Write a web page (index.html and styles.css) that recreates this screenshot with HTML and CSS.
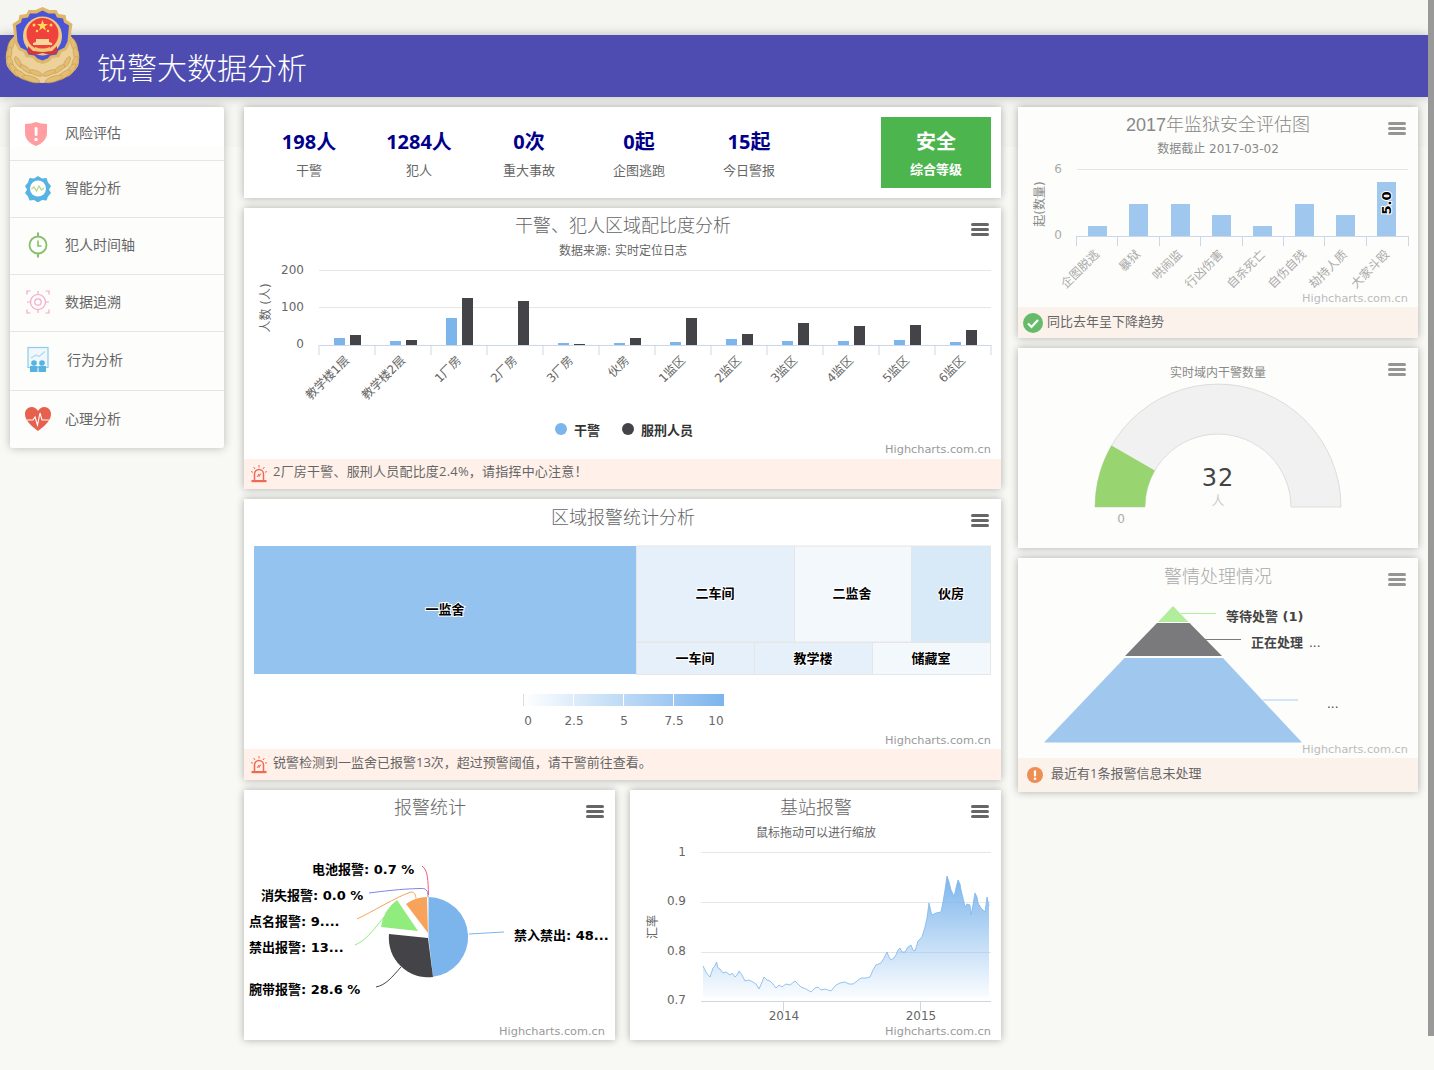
FILE: index.html
```html
<!DOCTYPE html>
<html>
<head>
	<meta charset="utf-8">
	<title>锐警大数据分析</title>
	<link rel="stylesheet" href="styles.css">
</head>

<body>
	<svg class="sprite">
		<symbol id="menu" viewBox="0 0 18 13">
			<rect x="0" y="0" width="18" height="3" rx="1.5" />
			<rect x="0" y="5" width="18" height="3" rx="1.5" />
			<rect x="0" y="10" width="18" height="3" rx="1.5" />
		</symbol>
		<symbol id="alarm" viewBox="0 0 16 18">
			<path d="M3.5 15V9a4.5 4.5 0 0 1 9 0v6" fill="none" stroke="#ef6a55" stroke-width="1.5" />
			<path d="M6 12l2-3v2.5l2-3" fill="none" stroke="#ef6a55" stroke-width="1" />
			<rect x="0.5" y="15" width="15" height="2.2" fill="#ef6a55" />
			<path d="M8 0v2.5M2.6 2l1.4 2M13.4 2L12 4M0 6.500l2 .8M16 6.500l-2 .8" stroke="#ef6a55" stroke-width="1" />
		</symbol>
		<symbol id="leaves" viewBox="0 0 45 85">
			<path d="M16 34C7 44 4 56 7 66c5 10 20 16 36 17V60z" fill="#ecd19a" />
			<g fill="#e3bd72" stroke="#c79c52" stroke-width=".6">
				<ellipse cx="11" cy="45" rx="7" ry="2.600" transform="rotate(-70 11 45)" />
				<ellipse cx="9" cy="54" rx="7" ry="2.600" transform="rotate(-80 9 54)" />
				<ellipse cx="10" cy="63" rx="7" ry="2.800" transform="rotate(75 10 63)" />
				<ellipse cx="14" cy="70" rx="7.500" ry="2.800" transform="rotate(55 14 70)" />
				<ellipse cx="21" cy="75" rx="8" ry="2.800" transform="rotate(35 21 75)" />
				<ellipse cx="31" cy="79" rx="9" ry="2.800" transform="rotate(18 31 79)" />
				<ellipse cx="18" cy="62" rx="6" ry="2.200" transform="rotate(60 18 62)" />
				<ellipse cx="26" cy="69" rx="7" ry="2.200" transform="rotate(35 26 69)" />
				<ellipse cx="36" cy="73" rx="7" ry="2.200" transform="rotate(20 36 73)" />
			</g>
		</symbol>
	</svg>

	<svg class="logo" viewBox="0 0 85 90" width="85" height="90">
		<use href="#leaves" x="0" y="0" width="45" height="85" />
		<use href="#leaves" x="-85" y="0" width="45" height="85" transform="scale(-1 1)" />
		<path d="M42.500 7l7 3 7 0 2 4 7 1 1 5 6 4-1 6-1 12-4 8-5 2-2 5-7 1-4 4-6 2-6-2-4-4-7-1-2-5-5-2-4-8-1-12-1-6 6-4 1-5 7-1 2-4 7 0z" fill="#e0b768" />
		<path d="M42.500 10.500l6 3 6.500 0 2 4 6 1 1 4 5 3-1.500 16-3 6-6 3-2 4-6 1-3 3-5 2-5-2-3-3-6-1-2-4-6-3-3-6-1.500-16 5-3 1-4 6-1 2-4 6.500 0z" fill="#4a54d6" />
		<circle cx="42.500" cy="36" r="19.500" fill="#efca84" />
		<circle cx="42.500" cy="34" r="16" fill="#f0423c" />
		<path d="M28 46l5 5 9.500 1 9.500-1 5-5v7l-7 2-7.500-2-7.500 2-7-2z" fill="#d8343a" />
		<path d="M42.500 20l1.400 4h4.100l-3.300 2.500 1.200 4-3.400-2.400-3.400 2.400 1.200-4-3.300-2.500h4.100z" fill="#ffd95a" />
		<circle cx="34" cy="25" r="1.500" fill="#ffd95a" />
		<circle cx="51" cy="25" r="1.500" fill="#ffd95a" />
		<circle cx="37" cy="31" r="1.200" fill="#ffd95a" />
		<circle cx="48" cy="31" r="1.200" fill="#ffd95a" />
		<path d="M33 45h19v-2l-3-1v-3h-13v3l-3 1z" fill="#f5d89a" />
		<path d="M35 47c5 2 10 2 15 0v3c-5 2-10 2-15 0z" fill="#f0c878" />
	</svg>

	<header class="topbar">
		<h1 class="topbar-title">锐警大数据分析</h1>
	</header>

	<div class="page">
		<ul class="sidebar">
			<li class="nav-item nav-first">
				<svg class="nav-icon nav-icon-first" viewBox="0 0 28 28" width="28" height="28">
					<path d="M3 4c4 0 8-1 11-2 3 1 7 2 11 2v9c0 6-5 11-11 13C8 24 3 19 3 13z" fill="#ff9da1" />
					<rect x="12.700" y="7" width="2.800" height="9" rx="1.200" fill="#fff" />
					<circle cx="14" cy="19.500" r="1.700" fill="#fff" />
				</svg>
				<span>风险评估</span>
			</li>
			<li class="nav-item">
				<svg class="nav-icon" viewBox="0 0 28 28" width="28" height="28">
					<path d="M14 2l4 2.500 4.500-.5 1.500 4.500 3 3.500-2 3.500 2 3.500-3 3.500-1.500 4-4.500-.5-4 2.500-4-2.500-4.500.5-1.500-4-3-3.500 2-3.500-2-3.500 3-3.500 1.500-4.500 4.500.5z" fill="#56b3e4" />
					<circle cx="14" cy="14.500" r="8" fill="#fff" />
					<path d="M7.500 15l2.500-2 2.500 4 2.500-5 2.500 4 2.500-2" fill="none" stroke="#b9d77e" stroke-width="1.300" />
				</svg>
				<span>智能分析</span>
			</li>
			<li class="nav-item">
				<svg class="nav-icon" viewBox="0 0 28 28" width="28" height="28">
					<circle cx="14" cy="14" r="8.500" fill="none" stroke="#86c16a" stroke-width="1.800" />
					<path d="M14 9.500V15h3.500" fill="none" stroke="#86c16a" stroke-width="1.600" />
					<path d="M14 1.500v4M14 22.500v4" stroke="#86c16a" stroke-width="2" />
				</svg>
				<span>犯人时间轴</span>
			</li>
			<li class="nav-item">
				<svg class="nav-icon" viewBox="0 0 28 28" width="28" height="28">
					<g fill="none" stroke="#f3a8c9" stroke-width="1.200">
						<circle cx="14" cy="14" r="7.500" />
						<circle cx="14" cy="14" r="3.200" />
						<path d="M14 3v3M14 22v3M3 14h3M22 14h3" />
						<path d="M3 6.500V3h3.500M21.500 3H25v3.500M25 21.500V25h-3.500M6.500 25H3v-3.500" />
					</g>
				</svg>
				<span>数据追溯</span>
			</li>
			<li class="nav-item nav-tall">
				<svg class="nav-icon" viewBox="0 0 28 28" width="28" height="28">
					<rect x="4" y="1.500" width="20" height="20" fill="#eef7fc" stroke="#8fcbea" stroke-width="1.200" />
					<path d="M7 12l5-3 3 1.500 6-5" fill="none" stroke="#b6d5ee" stroke-width="1.200" />
					<circle cx="10" cy="17" r="2.800" fill="#56b3e0" />
					<circle cx="18" cy="17" r="2.800" fill="#56b3e0" />
					<path d="M6 20h7.500v6H6zM14.500 20H22v6h-7.500z" fill="#56b3e0" />
				</svg>
				<span class="nav-label-shift">行为分析</span>
			</li>
			<li class="nav-item nav-last">
				<svg class="nav-icon" viewBox="0 0 28 28" width="28" height="28">
					<path d="M14 26C6 20 1 15 1 9c0-4 3-7 6.500-7C10.500 2 13 4 14 6c1-2 3.500-4 6.500-4C24 2 27 5 27 9c0 6-5 11-13 17z" fill="#e7604e" />
					<path d="M3 15h6l2-3 2.500 8L16 8l2 7h7" fill="none" stroke="#fff" stroke-width="1.100" />
				</svg>
				<span>心理分析</span>
			</li>
		</ul>

		<main class="center-col">
			<section class="card stats">
				<div class="stat"><b>198人</b><span>干警</span></div>
				<div class="stat"><b>1284人</b><span>犯人</span></div>
				<div class="stat"><b>0次</b><span>重大事故</span></div>
				<div class="stat"><b>0起</b><span>企图逃跑</span></div>
				<div class="stat"><b>15起</b><span>今日警报</span></div>
				<div class="level"><b>安全</b><span>综合等级</span></div>
			</section>

			<section class="card">
				<svg class="chart" viewBox="244 208 757 251" width="757" height="251">
					<text class="t-title" x="623" y="232">干警、犯人区域配比度分析</text>
					<text class="t-sub" x="623" y="255">数据来源: 实时定位日志</text>
					<use href="#menu" class="menu" x="971" y="223" width="18" height="13" />
					<g class="grid">
						<path d="M319 270.500H991M319 307.500H991" />
					</g>
					<path class="axis" d="M319 345.500H991M319 345v10M375 345v10M431 345v10M487 345v10M543 345v10M599 345v10M655 345v10M711 345v10M767 345v10M823 345v10M879 345v10M935 345v10M991 345v10" />
					<g class="t-axis t-end">
						<text x="304" y="274">200</text>
						<text x="304" y="311">100</text>
						<text x="304" y="348">0</text>
					</g>
					<text class="t-axis t-mid" transform="rotate(-90 270 308)" x="270" y="308">人数 (人)</text>
					<g class="bar-blue">
						<rect x="334" y="338" width="11" height="7" />
						<rect x="390" y="341" width="11" height="4" />
						<rect x="446" y="318" width="11" height="27" />
						<rect x="558" y="343" width="11" height="2" />
						<rect x="614" y="343" width="11" height="2" />
						<rect x="670" y="342" width="11" height="3" />
						<rect x="726" y="339" width="11" height="6" />
						<rect x="782" y="341" width="11" height="4" />
						<rect x="838" y="341" width="11" height="4" />
						<rect x="894" y="340" width="11" height="5" />
						<rect x="950" y="342" width="11" height="3" />
					</g>
					<g class="bar-dark">
						<rect x="350" y="335" width="11" height="10" />
						<rect x="406" y="340" width="11" height="5" />
						<rect x="462" y="298" width="11" height="47" />
						<rect x="518" y="301" width="11" height="44" />
						<rect x="574" y="344" width="11" height="1" />
						<rect x="630" y="338" width="11" height="7" />
						<rect x="686" y="318" width="11" height="27" />
						<rect x="742" y="334" width="11" height="11" />
						<rect x="798" y="323" width="11" height="22" />
						<rect x="854" y="326" width="11" height="19" />
						<rect x="910" y="325" width="11" height="20" />
						<rect x="966" y="330" width="11" height="15" />
					</g>
					<g class="t-axis t-end">
						<text transform="rotate(-45 350 361)" x="350" y="361">教学楼1层</text>
						<text transform="rotate(-45 406 361)" x="406" y="361">教学楼2层</text>
						<text transform="rotate(-45 462 361)" x="462" y="361">1厂房</text>
						<text transform="rotate(-45 518 361)" x="518" y="361">2厂房</text>
						<text transform="rotate(-45 574 361)" x="574" y="361">3厂房</text>
						<text transform="rotate(-45 630 361)" x="630" y="361">伙房</text>
						<text transform="rotate(-45 686 361)" x="686" y="361">1监区</text>
						<text transform="rotate(-45 742 361)" x="742" y="361">2监区</text>
						<text transform="rotate(-45 798 361)" x="798" y="361">3监区</text>
						<text transform="rotate(-45 854 361)" x="854" y="361">4监区</text>
						<text transform="rotate(-45 910 361)" x="910" y="361">5监区</text>
						<text transform="rotate(-45 966 361)" x="966" y="361">6监区</text>
					</g>
					<circle cx="561" cy="429" r="6" fill="#7cb5ec" />
					<text class="t-legend" x="574" y="435">干警</text>
					<circle cx="628" cy="429" r="6" fill="#434348" />
					<text class="t-legend" x="641" y="435">服刑人员</text>
					<text class="t-credit" x="991" y="453">Highcharts.com.cn</text>
				</svg>
				<div class="note note-first">
					<svg class="note-icon" width="16" height="18"><use href="#alarm" /></svg>
					<span>2厂房干警、服刑人员配比度2.4%，请指挥中心注意！</span>
				</div>
			</section>

			<section class="card">
				<svg class="chart" viewBox="244 499 757 250" width="757" height="250">
					<defs>
						<linearGradient id="scale-fill">
							<stop offset="0" stop-color="#fff" />
							<stop offset="1" stop-color="#7cb5ec" />
						</linearGradient>
					</defs>
					<text class="t-title" x="623" y="524">区域报警统计分析</text>
					<use href="#menu" class="menu" x="971" y="514" width="18" height="13" />
					<g class="cells">
						<rect x="636.500" y="546" width="158" height="96" fill="#e5f0fa" />
						<rect x="794.500" y="546" width="117" height="96" fill="#f3f8fd" />
						<rect x="911.500" y="546" width="79" height="96" fill="#d8e9f8" />
						<rect x="636.500" y="642.500" width="118" height="32" fill="#e5f0fa" />
						<rect x="754.500" y="642.500" width="118" height="32" fill="#e5f0fa" />
						<rect x="872.500" y="642.500" width="118" height="32" fill="#f3f8fd" />
					</g>
					<rect x="254" y="546" width="382" height="128" fill="#95c3ef" />
					<g class="t-label t-mid">
						<text x="445" y="614">一监舍</text>
						<text x="715" y="598">二车间</text>
						<text x="852" y="598">二监舍</text>
						<text x="951" y="598">伙房</text>
						<text x="695" y="663">一车间</text>
						<text x="813" y="663">教学楼</text>
						<text x="931" y="663">储藏室</text>
					</g>
					<rect x="523" y="694" width="201" height="12" fill="url(#scale-fill)" />
					<path d="M573.500 694v12M623.500 694v12M673.500 694v12" stroke="#fff" />
					<path d="M523.500 694v12" stroke="#ddd" />
					<g class="t-axis t-mid">
						<text x="528" y="725">0</text>
						<text x="574" y="725">2.5</text>
						<text x="624" y="725">5</text>
						<text x="674" y="725">7.5</text>
						<text x="716" y="725">10</text>
					</g>
					<text class="t-credit" x="991" y="744">Highcharts.com.cn</text>
				</svg>
				<div class="note note-tall">
					<svg class="note-icon" width="16" height="18"><use href="#alarm" /></svg>
					<span>锐警检测到一监舍已报警13次，超过预警阈值，请干警前往查看。</span>
				</div>
			</section>

			<div class="chart-pair">
				<section class="card">
					<svg class="chart" viewBox="244 790 371 250" width="371" height="250">
						<text class="t-title" x="430" y="814">报警统计</text>
						<use href="#menu" class="menu" x="586" y="805" width="18" height="13" />
						<path d="M428.500 937L428.500 897A40 40 0 0 1 433 976.700Z" fill="#7cb5ec" />
						<path d="M428 938L433 977A39.300 39.300 0 0 1 389 934Z" fill="#434348" />
						<path d="M418 931L381 927A40 40 0 0 1 397 900Z" fill="#90ed7d" />
						<path d="M428 933L406 904A36 36 0 0 1 427 897Z" fill="#f7a35c" />
						<g fill="none">
							<path d="M469 934L504 932" stroke="#7cb5ec" />
							<path d="M401 967C392 977 386 985 376 987" stroke="#434348" />
							<path d="M384 917C372 932 365 941 355 945" stroke="#90ed7d" />
							<path d="M416 898C415 893 414 892 411 892C396 897 372 912 357 919" stroke="#f7a35c" />
							<path d="M428 897C428 890 426 888 420 888.500C400 889 385 891 369 893" stroke="#8085e9" />
							<path d="M428.500 895C428 880 428 870 422 866" stroke="#f15c80" />
						</g>
						<g class="t-label">
							<text x="312" y="874">电池报警: 0.7 %</text>
							<text x="261" y="900">消失报警: 0.0 %</text>
							<text x="249" y="926">点名报警: 9....</text>
							<text x="249" y="952">禁出报警: 13...</text>
							<text x="249" y="994">腕带报警: 28.6 %</text>
							<text x="514" y="940">禁入禁出: 48...</text>
						</g>
						<text class="t-credit" x="605" y="1035">Highcharts.com.cn</text>
					</svg>
				</section>
				<section class="card">
					<svg class="chart" viewBox="630 790 371 250" width="371" height="250">
						<defs>
							<linearGradient id="area-fill" x1="0" y1="0" x2="0" y2="1">
								<stop offset="0" stop-color="#7cb5ec" />
								<stop offset="1" stop-color="#7cb5ec" stop-opacity="0.03" />
							</linearGradient>
						</defs>
						<text class="t-title" x="816" y="814">基站报警</text>
						<text class="t-sub" x="816" y="837">鼠标拖动可以进行缩放</text>
						<use href="#menu" class="menu" x="971" y="805" width="18" height="13" />
						<path class="grid-line" d="M701 852.500H991M701 902.500H991M701 952.500H991" />
						<path class="axis" d="M701 1001.500H991M783.500 1001v10M920.500 1001v10" />
						<g class="t-axis t-end">
							<text x="686" y="856">1</text>
							<text x="686" y="905">0.9</text>
							<text x="686" y="955">0.8</text>
							<text x="686" y="1004">0.7</text>
						</g>
						<text class="t-axis t-mid" transform="rotate(-90 657 927)" x="657" y="927">汇率</text>
						<g class="t-axis t-mid">
							<text x="784" y="1020">2014</text>
							<text x="921" y="1020">2015</text>
						</g>
						<path d="M703 966L705 970L706.500 973L710 977L713 968L715 966L716.500 962L718 968L720 969L723 973L726 972L730 975L732 973L735 977L737 975L739 971L742 975L745 981L749 980L753 982L756 984L759 989L762 982L764 977L767 980L770 981L773 984L776 988L779 985L782 987L786 984L790 985L795 981L798 984L801 987L806 989L811 992L815 988L818 987L821 990L825 989L828 990L831 991L836 985L840 983L845 982L849 984L853 984L857 981L861 978L866 978L870 977L873 970L876 965L881 963L884 958L887 952L889 957L891 960L894 958L896 955L898 950L900 948L902 952L905 952L908 947L911 945L913 950L915 951L918 941L922 937L925 927L927 918L929 903L931 912L932 915L936 913L941 912L943 902L945 890L947 876L949 882L951 890L953 894L954 897L956 888L958 880L960 884L961 890L963 898L965 907L967 904L970 905L971 915L973 905L975 893L977 897L978 903L981 908L985 912L986 905L987 897L989 906V998H703Z" fill="url(#area-fill)" stroke="none" />
						<path d="M703 966L705 970L706.500 973L710 977L713 968L715 966L716.500 962L718 968L720 969L723 973L726 972L730 975L732 973L735 977L737 975L739 971L742 975L745 981L749 980L753 982L756 984L759 989L762 982L764 977L767 980L770 981L773 984L776 988L779 985L782 987L786 984L790 985L795 981L798 984L801 987L806 989L811 992L815 988L818 987L821 990L825 989L828 990L831 991L836 985L840 983L845 982L849 984L853 984L857 981L861 978L866 978L870 977L873 970L876 965L881 963L884 958L887 952L889 957L891 960L894 958L896 955L898 950L900 948L902 952L905 952L908 947L911 945L913 950L915 951L918 941L922 937L925 927L927 918L929 903L931 912L932 915L936 913L941 912L943 902L945 890L947 876L949 882L951 890L953 894L954 897L956 888L958 880L960 884L961 890L963 898L965 907L967 904L970 905L971 915L973 905L975 893L977 897L978 903L981 908L985 912L986 905L987 897L989 906" fill="none" stroke="#7cb5ec" stroke-opacity="0.8" />
						<text class="t-credit" x="991" y="1035">Highcharts.com.cn</text>
					</svg>
				</section>
			</div>
		</main>

		<aside class="right-col">
			<section class="card card-soft">
				<svg class="chart" viewBox="1018 107 400 200" width="400" height="200">
					<text class="t-title t-dim" x="1218" y="131">2017年监狱安全评估图</text>
					<text class="t-sub t-dim" x="1218" y="153">数据截止 2017-03-02</text>
					<use href="#menu" class="menu menu-dim" x="1388" y="122" width="18" height="13" />
					<path class="grid-line" d="M1077 169.500H1408" />
					<path class="axis" d="M1077 236.500H1408M1076.500 236v10M1117.500 236v10M1159.500 236v10M1200.500 236v10M1242.500 236v10M1283.500 236v10M1324.500 236v10M1366.500 236v10M1408.500 236v10" />
					<g class="t-axis t-end t-faint">
						<text x="1062" y="173">6</text>
						<text x="1062" y="239">0</text>
					</g>
					<text class="t-axis t-mid t-dim" transform="rotate(-90 1044 204)" x="1044" y="204">起(数量)</text>
					<g class="bar-soft">
						<rect x="1088" y="226" width="19" height="10" />
						<rect x="1129" y="204" width="19" height="32" />
						<rect x="1171" y="204" width="19" height="32" />
						<rect x="1212" y="215" width="19" height="21" />
						<rect x="1253" y="226" width="19" height="10" />
						<rect x="1295" y="204" width="19" height="32" />
						<rect x="1336" y="215" width="19" height="21" />
						<rect x="1377" y="182" width="19" height="54" />
					</g>
					<text class="t-label t-mid" transform="rotate(-90 1391 203)" x="1391" y="203">5.0</text>
					<g class="t-axis t-end t-faint">
						<text transform="rotate(-45 1100 255)" x="1100" y="255">企图脱逃</text>
						<text transform="rotate(-45 1141 255)" x="1141" y="255">暴狱</text>
						<text transform="rotate(-45 1183 255)" x="1183" y="255">哄闹监</text>
						<text transform="rotate(-45 1224 255)" x="1224" y="255">行凶伤害</text>
						<text transform="rotate(-45 1266 255)" x="1266" y="255">自杀死亡</text>
						<text transform="rotate(-45 1307 255)" x="1307" y="255">自伤自残</text>
						<text transform="rotate(-45 1348 255)" x="1348" y="255">劫持人质</text>
						<text transform="rotate(-45 1390 255)" x="1390" y="255">大家斗殴</text>
					</g>
					<text class="t-credit t-credit-dim" x="1408" y="302">Highcharts.com.cn</text>
				</svg>
				<div class="note note-soft note-check">
					<svg class="note-icon" viewBox="0 0 20 20" width="20" height="20">
						<circle cx="10" cy="10" r="10" fill="#66bb6a" />
						<path d="M5 10.500l3.500 3.500L15 7" fill="none" stroke="#fff" stroke-width="2.200" />
					</svg>
					<span>同比去年呈下降趋势</span>
				</div>
			</section>

			<section class="card card-soft">
				<svg class="chart" viewBox="1018 348 400 200" width="400" height="200">
					<text class="t-sub t-dim" x="1218" y="377">实时域内干警数量</text>
					<use href="#menu" class="menu menu-dim" x="1388" y="363" width="18" height="13" />
					<path d="M1095 507A123 123 0 0 1 1341 507H1291A73 73 0 0 0 1145 507Z" fill="#f1f1f1" stroke="#ddd" />
					<path d="M1095 507A123 123 0 0 1 1111.500 445.500L1154.800 470.500A73 73 0 0 0 1145 507Z" fill="#98d570" />
					<text class="t-gauge" x="1218" y="486">32</text>
					<text class="t-unit" x="1218" y="505">人</text>
					<text class="t-axis t-mid t-faint" x="1121" y="523">0</text>
				</svg>
			</section>

			<section class="card card-soft">
				<svg class="chart" viewBox="1018 558 400 200" width="400" height="200">
					<text class="t-title t-faint" x="1218" y="583">警情处理情况</text>
					<use href="#menu" class="menu menu-dim" x="1388" y="573" width="18" height="13" />
					<path d="M1173 606L1188.500 622H1158Z" fill="#b0ee9c" />
					<path d="M1157 623H1189.500L1222 656H1125Z" fill="#7a7a7c" />
					<path d="M1124.500 658H1223L1302 742.500H1044Z" fill="#a0c8ef" />
					<path d="M1181 613.500H1216" stroke="#b0ee9c" />
					<path d="M1205 639.500H1241" stroke="#7a7a7c" />
					<path d="M1263 700H1298" stroke="#c4dcf4" stroke-width="1.500" />
					<g class="t-legend t-legend-dark">
						<text x="1226" y="621">等待处警 (1)</text>
						<text x="1251" y="647">正在处理</text>
						<text class="t-dots" x="1309" y="647">...</text>
						<text class="t-dots" x="1327" y="708">...</text>
					</g>
					<text class="t-credit t-credit-dim" x="1408" y="753">Highcharts.com.cn</text>
				</svg>
				<div class="note note-soft note-info">
					<svg class="note-icon" viewBox="0 0 16 16" width="16" height="16">
						<circle cx="8" cy="8" r="8" fill="#ee8e52" />
						<rect x="6.900" y="3.200" width="2.200" height="6.300" rx="1" fill="#fff" />
						<circle cx="8" cy="11.800" r="1.300" fill="#fff" />
					</svg>
					<span>最近有1条报警信息未处理</span>
				</div>
			</section>
		</aside>
	</div>

	<div class="scroll-strip"></div>
</body>
</html>
```

FILE: styles.css
```css
html, body {
  margin: 0;
  padding: 0;
  height: 1070px;
  overflow: hidden;
}

body {
  position: relative;
  background: linear-gradient(#f5f5f1 147px, #f8f8f4 147px);
  font-family: "Noto Sans CJK SC", sans-serif;
  color: #666;
}

.sprite {
  position: absolute;
  width: 0;
  height: 0;
}

.logo {
  position: absolute;
  left: 0;
  top: 0;
  z-index: 2;
}

.scroll-strip {
  position: absolute;
  right: 0;
  top: 0;
  width: 6px;
  height: 1036px;
  background: #999;
}

.topbar {
  width: 1428px;
  height: 62px;
  margin-top: 35px;
  display: inline-flex;
  align-items: center;
  padding-left: 97px;
  box-sizing: border-box;
  background: #4e4cb0;
  box-shadow: 0 0 10px rgba(0, 0, 0, .25);
  vertical-align: top;
}

.topbar-title {
  margin: 0 0 1px;
  font-size: 30px;
  font-weight: 300;
  line-height: 1;
  color: #fff;
}

.page {
  display: flex;
  align-items: flex-start;
  width: 1428px;
  padding: 10px 0 0 10px;
  box-sizing: border-box;
}

/* left menu */
.sidebar {
  list-style: none;
  margin: 0;
  padding: 0;
  width: 214px;
  background: linear-gradient(#fff 40px, #fdfdfb 40px);
  border-radius: 3px;
  box-shadow: 0 0 10px rgba(0, 0, 0, .25);
}

.nav-item {
  display: flex;
  align-items: center;
  height: 56px;
  border-bottom: 1px solid #e6e6e6;
  padding-left: 14px;
  font-size: 14px;
  color: #666;
}

.nav-item span {
  margin-bottom: 4px;
}

.nav-first {
  height: 53px;
}

.nav-tall {
  height: 58px;
}

.nav-last {
  height: 57px;
  border-bottom: 0;
}

.nav-icon {
  margin: 0 13px 2px 0;
  flex: none;
}

.nav-icon-first {
  margin-bottom: 0;
  margin-left: -2px;
  margin-right: 15px;
}

.nav-label-shift {
  margin-left: 2px;
}

/* cards */
.card {
  background: #fff;
  box-shadow: 0 0 8px rgba(0, 0, 0, .3);
}

.card-soft {
  background: #fdfdfb;
}

.center-col {
  display: flex;
  flex-direction: column;
  gap: 10px;
  width: 757px;
  margin-left: 20px;
}

.right-col {
  display: flex;
  flex-direction: column;
  gap: 10px;
  width: 400px;
  margin-left: 17px;
}

.chart-pair {
  display: flex;
  justify-content: space-between;
}

.chart {
  display: block;
}

.stats {
  display: flex;
  align-items: center;
  height: 91px;
  padding: 0 10px;
  box-sizing: border-box;
}

.stat {
  display: flex;
  flex-direction: column;
  align-items: center;
  width: 110px;
  padding-top: 6px;
  font-family: "Open Sans", "Noto Sans CJK SC", sans-serif;
}

.stat b {
  font-size: 20px;
  line-height: 28px;
  color: #00008b;
}

.stat span {
  font-size: 13px;
  line-height: 28px;
  color: #666;
}

.level {
  display: flex;
  flex-direction: column;
  align-items: center;
  justify-content: center;
  width: 110px;
  height: 71px;
  padding-top: 2px;
  box-sizing: border-box;
  margin-left: auto;
  background: #4cb54e;
  color: #fff;
}

.level b {
  font-size: 20px;
  line-height: 30px;
}

.level span {
  font-size: 13px;
  font-weight: 700;
  line-height: 26px;
}

/* strip under a chart */
.note {
  display: flex;
  align-items: center;
  gap: 6px;
  height: 30px;
  padding-left: 7px;
  background: #fff1ea;
  font-family: "Open Sans", "Noto Sans CJK SC", sans-serif;
  font-size: 13px;
  color: #666;
}

.note span {
  margin-bottom: 4px;
}

.note-first span {
  margin-bottom: 8px;
  letter-spacing: .2px;
}

.note-tall {
  height: 31px;
}

.note-tall span {
  margin-bottom: 6px;
}

.note-soft {
  background: #fcf2ec;
  height: 31px;
}

.note-check {
  padding-left: 5px;
  gap: 4px;
}

.note-info {
  height: 34px;
  padding-left: 9px;
  gap: 8px;
}

.note-info span {
  margin-bottom: 6px;
}

.note-icon {
  flex: none;
}

/* chart text and marks */
.chart text {
  font-family: "DejaVu Sans", "Noto Sans CJK SC", sans-serif;
}

.chart .t-title {
  font-family: "Liberation Sans", "Noto Sans CJK SC", sans-serif;
  font-size: 18px;
  font-weight: 300;
  fill: #666;
  text-anchor: middle;
}

.chart .t-sub {
  font-size: 12px;
  fill: #666;
  text-anchor: middle;
}

.chart .t-dim {
  fill: #888;
}

.chart .t-faint,
.chart .t-faint text {
  fill: #aaa;
}

.t-axis {
  font-size: 12px;
  fill: #666;
}

.t-end {
  text-anchor: end;
}

.t-mid {
  text-anchor: middle;
}

.t-label {
  font-size: 13px;
  font-weight: 700;
  fill: #000;
  stroke: #fff;
  stroke-width: 2px;
  paint-order: stroke;
}

.t-legend {
  font-size: 13px;
  font-weight: 700;
  fill: #333;
}

.t-legend-dark text {
  fill: #444;
}

.chart .t-dots {
  font-size: 12px;
  font-weight: 400;
}

.chart .t-credit {
  font-size: 11.300px;
  fill: #999;
  text-anchor: end;
}

.chart .t-credit-dim {
  fill: #bbb;
}

.chart .t-gauge {
  font-size: 24px;
  letter-spacing: 1px;
  fill: #444;
  text-anchor: middle;
}

.chart .t-unit {
  font-size: 13px;
  fill: #ccc;
  text-anchor: middle;
}

.menu {
  fill: #666;
}

.menu-dim {
  fill: #959595;
}

.grid path,
.grid-line {
  stroke: #e6e6e6;
  fill: none;
}

.axis {
  stroke: #ccd6eb;
  fill: none;
}

.bar-blue {
  fill: #7cb5ec;
}

.bar-dark {
  fill: #434348;
}

.bar-soft {
  fill: #a0c8ef;
}

.cells rect {
  stroke: #e6e6e6;
}
```
